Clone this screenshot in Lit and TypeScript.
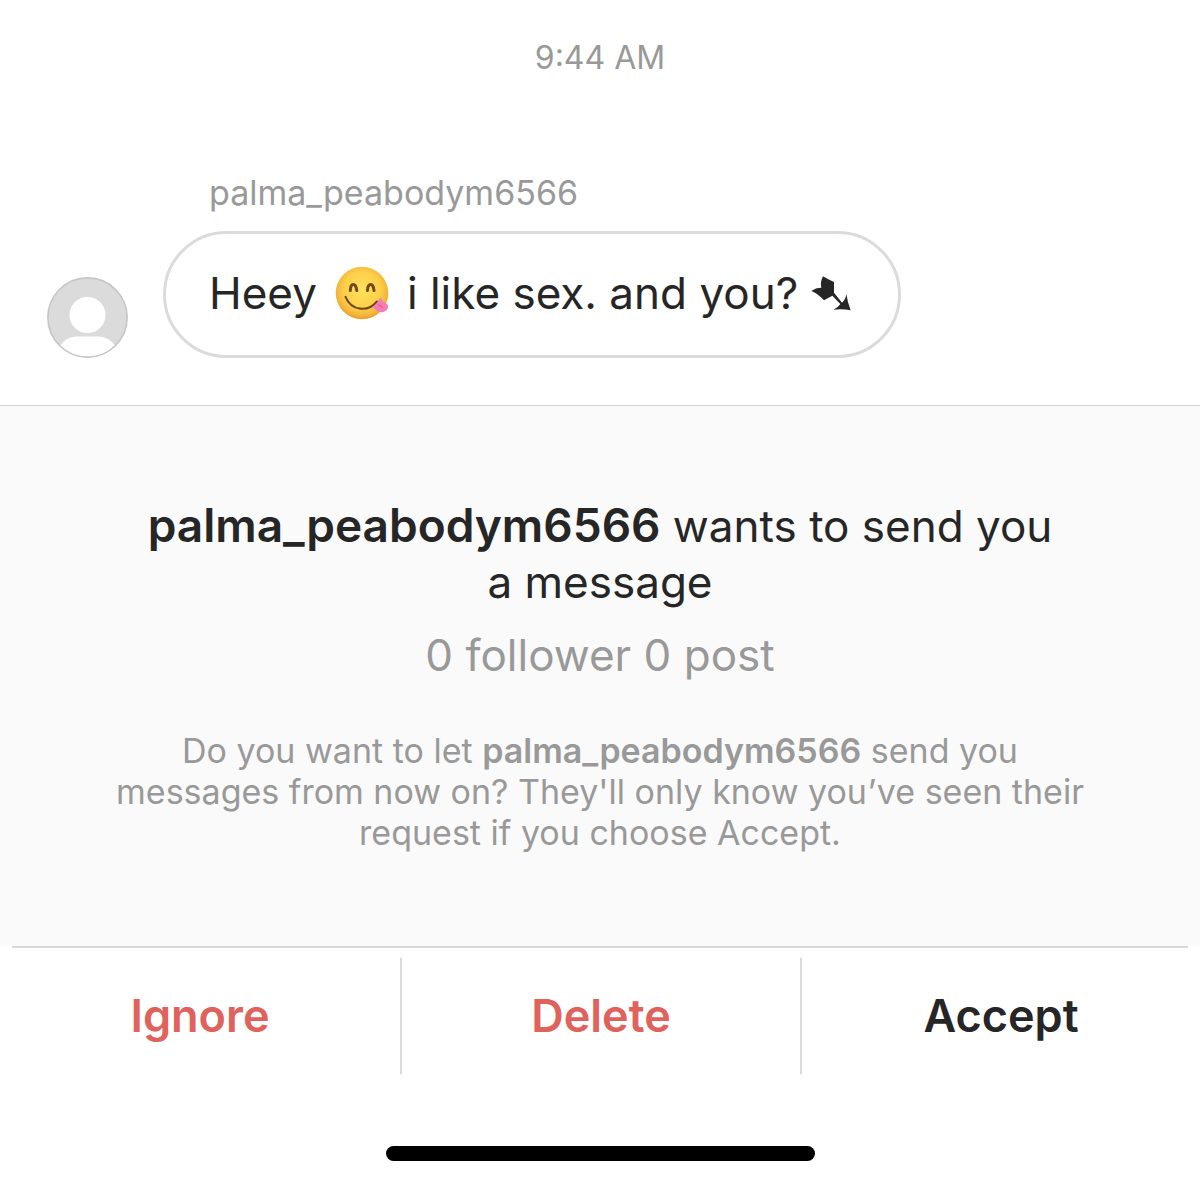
import { LitElement, html, css } from "lit";
import { customElement, property } from "lit/decorators.js";

@customElement("message-thread")
class MessageThread extends LitElement {
  @property() username = "";
  @property() time = "";

  static styles = css`
    :host {
      display: block;
      padding: 38px 47px 47px;
    }
    .time {
      display: block;
      text-align: center;
      font-size: 32px;
      line-height: 40px;
      color: #999;
    }
    .row {
      display: flex;
      align-items: flex-end;
      gap: 35px;
      margin-top: 93px;
    }
    .avatar {
      flex: none;
      display: block;
      width: 81px;
      height: 81px;
    }
    .name {
      padding-left: 46px;
      font-size: 34px;
      line-height: 44px;
      color: #999;
    }
    .bubble {
      display: flex;
      align-items: center;
      box-sizing: border-box;
      min-height: 127px;
      margin: 16px 0 0;
      padding: 0 47px 3px 43px;
      border: 3px solid #dbdbdb;
      border-radius: 64px;
      font-size: 44px;
      line-height: 56px;
      color: #262626;
    }
    .emoji {
      flex: none;
      width: 54px;
      height: 54px;
      margin: 0 18px;
    }
    .arrow {
      flex: none;
      width: 40px;
      height: 35px;
      margin-left: 13px;
    }
  `;

  render() {
    return html`
      <time class="time">${this.time}</time>
      <div class="row">
        <svg class="avatar" viewBox="0 0 81 81" aria-hidden="true">
          <defs><clipPath id="round"><circle cx="40.5" cy="40.5" r="39.5" /></clipPath></defs>
          <circle cx="40.5" cy="40.5" r="40" fill="#dbdbdb" />
          <g clip-path="url(#round)" fill="#fff">
            <circle cx="40.5" cy="38" r="18" />
            <path d="M12 70Q19 59.5 29 59.5H52Q62 59.5 69 70L64 82H17Z" />
          </g>
          <circle cx="40.5" cy="40.5" r="39.6" fill="none" stroke="#c6c6c6" stroke-width="1.6" />
        </svg>
        <div>
          <div class="name">${this.username}</div>
          <p class="bubble">
            <span>Heey</span>
            <svg class="emoji" viewBox="0 0 54 54" role="img" aria-label="😋">
              <defs>
                <radialGradient id="face" cx=".5" cy=".44" r=".57">
                  <stop offset="0" stop-color="#ffe05c" />
                  <stop offset=".6" stop-color="#fdd04b" />
                  <stop offset=".88" stop-color="#f3b237" />
                  <stop offset="1" stop-color="#dd962e" />
                </radialGradient>
              </defs>
              <circle cx="27" cy="27" r="26.3" fill="url(#face)" />
              <path d="M15.3 24.6C15.6 16.6 20.8 16.6 21.8 24.6M32.4 24.6C33 16.6 38.2 16.6 39 24.6" fill="none" stroke="#71481c" stroke-width="3" stroke-linecap="round" />
              <path d="M10.5 30.8C16.5 45 33 46.5 42 35.5" fill="none" stroke="#71481c" stroke-width="2.1" stroke-linecap="round" />
              <path d="M45 31.5Q42 38.5 37.5 40.5Q42.5 47.5 48.5 46Q54.500 43.500 52.500 38.500Q48.500 36 45 31.500Z" fill="#f67db4" />
              <path d="M43.500 38.500L47.500 41.500" stroke="#de5c96" stroke-width="1.300" stroke-linecap="round" />
            </svg>
            <span>i like sex. and you?</span>
            <svg class="arrow" viewBox="10 18 120 105" role="img" aria-label="➷" fill="currentColor">
              <path d="M11 63Q24 53 41 53Q37 36 46 19Q60 28 79 36L79 68L103 98Q114 88 116 72Q120 98 129 121Q102 115 77 119Q92 112 98 102L74 77L49 91Q30 70 11 63Z" />
            </svg>
          </p>
        </div>
      </div>
    `;
  }
}

@customElement("request-panel")
class RequestPanel extends LitElement {
  @property() username = "";

  static styles = css`
    :host {
      display: block;
      padding: 92px 100px 93px;
      border-top: 1px solid #d4d4d4;
      background: #fafafa;
      text-align: center;
    }
    .title,
    .stats,
    .note {
      margin: 0 auto;
      font-weight: 400;
    }
    .title {
      max-width: 960px;
      font-size: 44px;
      line-height: 56px;
      color: #262626;
    }
    .title b {
      font-size: 46px;
      line-height: 1;
    }
    .stats {
      margin-top: 17px;
      font-size: 44px;
      line-height: 56px;
      color: #999;
    }
    .note {
      max-width: 1000px;
      margin-top: 47px;
      font-size: 34px;
      line-height: 41px;
      color: #999;
    }
    b {
      font-weight: 600;
    }
  `;

  render() {
    return html`
      <h1 class="title"><b>${this.username}</b> wants to send you<br />a message</h1>
      <p class="stats">0 follower 0 post</p>
      <p class="note">
        Do you want to let <b>${this.username}</b> send you<br />
        messages from now on? They'll only know you’ve seen their<br />
        request if you choose Accept.
      </p>
    `;
  }
}

@customElement("app-root")
class AppRoot extends LitElement {
  static styles = css`
    :host {
      display: flex;
      flex-direction: column;
      min-height: 100vh;
      background: #fff;
      font-family: Inter, "Liberation Sans", sans-serif;
    }
    .rule {
      height: 2px;
      margin: 0 12px;
      background: #d9d9d9;
    }
    .actions {
      display: grid;
      grid-template-columns: repeat(3, 1fr);
      padding: 10px 0;
    }
    .action {
      min-height: 116px;
      padding: 0;
      border: 0;
      background: none;
      font: 600 45px/56px Inter, "Liberation Sans", sans-serif;
      color: #262626;
      cursor: pointer;
    }
    .action + .action {
      border-left: 2px solid #dbdbdb;
    }
    .danger {
      color: #e0625c;
    }
    .home {
      width: 429px;
      height: 15px;
      margin: auto auto 23px;
      border-radius: 8px;
      background: #000;
    }
  `;

  render() {
    const username = "palma_peabodym6566";
    return html`
      <message-thread .username=${username} time="9:44 AM"></message-thread>
      <request-panel .username=${username}></request-panel>
      <div class="rule"></div>
      <div class="actions">
        <button class="action danger" type="button">Ignore</button>
        <button class="action danger" type="button">Delete</button>
        <button class="action" type="button">Accept</button>
      </div>
      <div class="home"></div>
    `;
  }
}
